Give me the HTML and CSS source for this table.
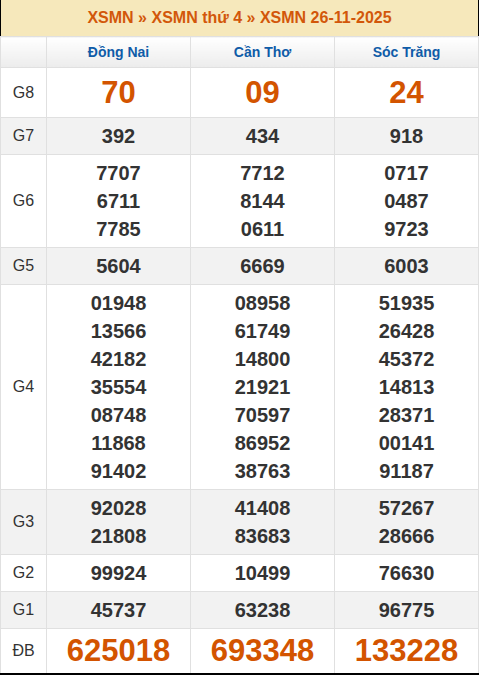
FILE: index.html
```html
<!DOCTYPE html>
<html lang="vi">
<head>
<meta charset="utf-8">
<title>XSMN 26-11-2025</title>
<link rel="stylesheet" href="styles.css">
</head>
<body>
<table class="kq">
  <colgroup>
    <col class="c-label">
    <col class="c-prov">
    <col class="c-prov">
    <col class="c-prov">
  </colgroup>
  <thead>
    <tr class="title-row">
      <th colspan="4">XSMN » XSMN thứ 4 » XSMN 26-11-2025</th>
    </tr>
    <tr class="head-row">
      <th></th>
      <th>Đồng Nai</th>
      <th>Cần Thơ</th>
      <th>Sóc Trăng</th>
    </tr>
  </thead>
  <tbody>
    <tr class="big">
      <td class="lbl">G8</td>
      <td>70</td><td>09</td><td>24</td>
    </tr>
    <tr class="alt">
      <td class="lbl">G7</td>
      <td>392</td><td>434</td><td>918</td>
    </tr>
    <tr>
      <td class="lbl">G6</td>
      <td>7707<br>6711<br>7785</td>
      <td>7712<br>8144<br>0611</td>
      <td>0717<br>0487<br>9723</td>
    </tr>
    <tr class="alt">
      <td class="lbl">G5</td>
      <td>5604</td><td>6669</td><td>6003</td>
    </tr>
    <tr>
      <td class="lbl">G4</td>
      <td>01948<br>13566<br>42182<br>35554<br>08748<br>11868<br>91402</td>
      <td>08958<br>61749<br>14800<br>21921<br>70597<br>86952<br>38763</td>
      <td>51935<br>26428<br>45372<br>14813<br>28371<br>00141<br>91187</td>
    </tr>
    <tr class="alt">
      <td class="lbl">G3</td>
      <td>92028<br>21808</td>
      <td>41408<br>83683</td>
      <td>57267<br>28666</td>
    </tr>
    <tr>
      <td class="lbl">G2</td>
      <td>99924</td><td>10499</td><td>76630</td>
    </tr>
    <tr class="alt">
      <td class="lbl">G1</td>
      <td>45737</td><td>63238</td><td>96775</td>
    </tr>
    <tr class="big db">
      <td class="lbl">ĐB</td>
      <td>625018</td><td>693348</td><td>133228</td>
    </tr>
  </tbody>
</table>
</body>
</html>
```

FILE: styles.css
```css
html, body {
  margin: 0;
  padding: 0;
  background: #fff;
}

body {
  font-family: "Liberation Sans", Arial, sans-serif;
}

.kq {
  width: 479px;
  border-collapse: collapse;
  table-layout: fixed;
  border-left: 1px solid #000;
  border-right: 1px solid #000;
  border-bottom: 2px solid #000;
}

.c-label { width: 46px; }
.c-prov { width: 144px; }

.kq th,
.kq td {
  border: 1px solid #e0e0e0;
  text-align: center;
  padding: 4px 0;
}

.title-row th {
  background: #f6e8bb;
  color: #d2570a;
  font-size: 16px;
  font-weight: bold;
  line-height: 36px;
  padding: 0;
  border-top: none;
  border-left: 1px solid #000;
  border-right: 1px solid #000;
}

.head-row th {
  background: linear-gradient(#ffffff, #ececec);
  color: #0f5ca8;
  font-size: 14px;
  font-weight: bold;
  line-height: 30px;
  padding: 0;
}

.kq td {
  font-size: 20px;
  font-weight: bold;
  line-height: 28px;
  color: #333;
}

.kq td.lbl {
  font-size: 16px;
  font-weight: normal;
  color: #333;
}

.kq tr.alt td {
  background: #f2f2f2;
}

.kq tr.big td {
  font-size: 31px;
  color: #d35400;
  line-height: 41px;
}

.kq tr.db td {
  line-height: 36px;
}

.kq tr.big td.lbl {
  font-size: 16px;
  color: #333;
}
```
